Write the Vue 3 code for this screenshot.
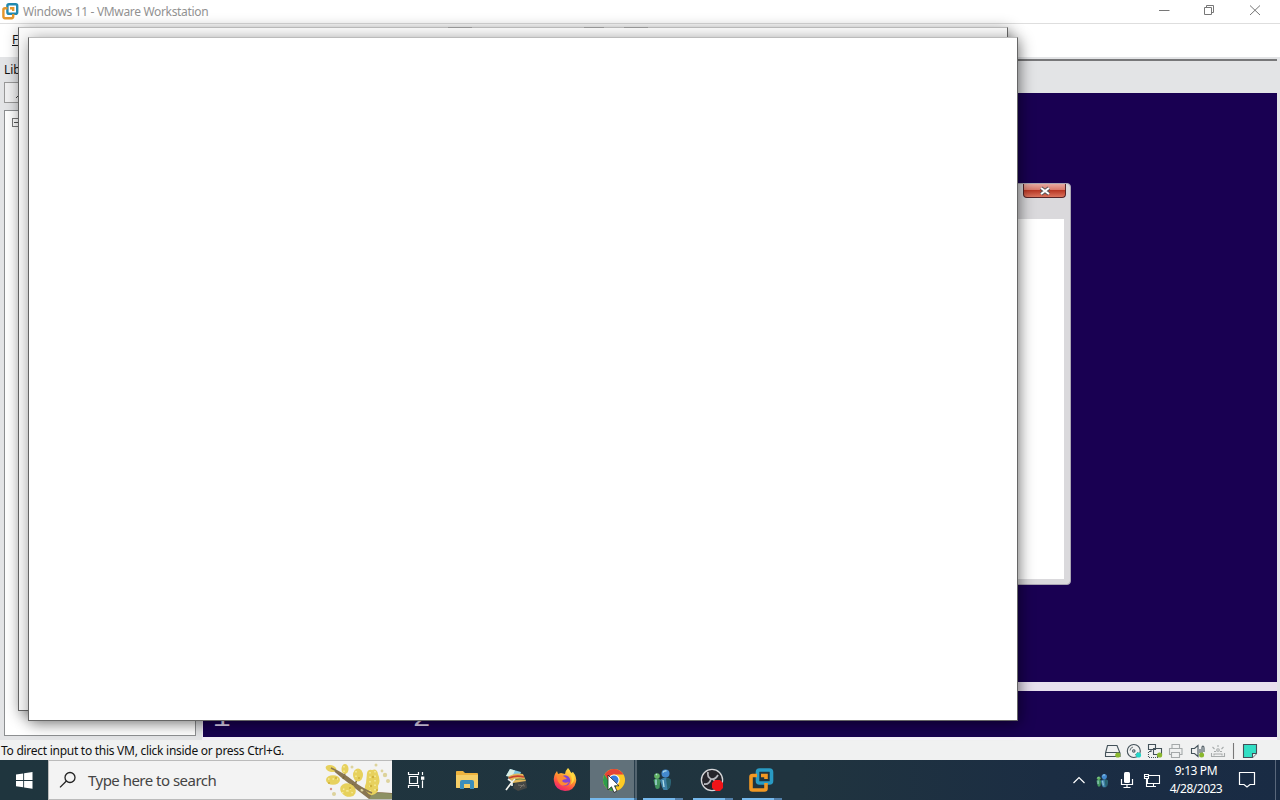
<script setup>
import { ref } from "vue";

const time = ref('9:13 PM')
const date = ref('4/28/2023')
const status = ref('To direct input to this VM, click inside or press Ctrl+G.')
</script>

<template>
    <div class="desktop">
        <div class="vmware">
            <header class="title_bar">
                <svg class="logo" width="18" height="18" viewBox="0 0 18 18" fill="none" stroke-width="2.4">
                    <rect x="6.4" y="2.2" width="9.8" height="9.6" rx="1.6" stroke="#2389ae" />
                    <path d="M6.5 6.2H4Q2.4 6.2 2.4 7.8V14.6Q2.4 16.2 4 16.2H10.6Q12.2 16.2 12.2 14.6V12M9 6.2H12.2V9" stroke="#e5962b" />
                </svg>
                <span class="title">Windows 11 - VMware Workstation</span>
                <svg class="controls" width="112" height="23" viewBox="0 0 112 23" fill="none" stroke="#777">
                    <path d="M7 10.5H17.5M52.5 7.5H59.5V14.5H52.5ZM54.5 7V5.5H61.5V12.5H60M98 5.5L108 15M108 5.5L98 15" />
                </svg>
            </header>
            <nav class="menu"><u>F</u>ile</nav>
            <main class="body">
                <aside class="library">
                    <span class="lib_title">Library</span>
                    <div class="lib_search">
                        <svg width="12" height="12" viewBox="0 0 12 12" fill="none" stroke="#444"><path d="M1 10L5 6" /><circle cx="7.5" cy="4" r="3" /></svg>
                    </div>
                    <div class="tree"><i class="expand"></i></div>
                </aside>
                <section class="guest">
                    <div class="tabs"></div>
                    <div class="screen"></div>
                    <div class="divider"></div>
                    <div class="console"><span class="one">1</span><span class="two">2</span></div>
                </section>
            </main>
            <footer class="status">
                <span class="status_text">{{ status }}</span>
                <svg class="devices" width="160" height="18" viewBox="0 0 160 18" fill="none" stroke="#435159" stroke-width="1.1">
                    <path d="M7.5 3.5H17L20 11V14.5H5.5V11ZM5.5 10.5H20" />
                    <circle cx="33.8" cy="9" r="6.5" /><circle cx="33.8" cy="9" r="1.2" />
                    <path d="M30 8.5A4 4 0 0 1 33 5M35 13A4 4 0 0 0 38 10" stroke-width=".8" />
                    <path d="M48.5 2.5H55.5V7.5H48.5ZM53.5 6.5H61.5V12.5H53.5ZM51 7.5V9.5H49M57.5 12.5V15" />
                    <path d="M48.5 10V15.5H58" stroke-dasharray="1 1" />
                    <g stroke="#a5a9aa"><path d="M72 6.5V2.5H79.5V6.5M71.5 12.5H69.5V6.5H82V12.5H80M71.5 10.5H79.5V15.5H71.5Z" /></g>
                    <path d="M91.5 6.5H94.5L98 3.5V14.5L94.5 11.5H91.5ZM100 7V11M102 13V5.5Q102 4 103 4T104 6V10" />
                    <g stroke="#a7abab"><path d="M111.5 11V14.5H124.5V11M114 13.5V12H122V13.5M118 3V5M112.5 5L114.5 7M123.5 5L121.5 7M114 9.5H116M120 9.5H122" /><circle cx="118" cy="8" r="1.3" /></g>
                    <g stroke="none"><circle cx="17.8" cy="13" r="2.6" fill="#8ab82e" /><circle cx="38.5" cy="13" r="2.6" fill="#25d5c6" /><circle cx="59.6" cy="13" r="2.6" fill="#8ab82e" /><circle cx="101.6" cy="13" r="2.5" fill="#8ab82e" /></g>
                    <path d="M133.5 1V17" stroke="#777" />
                    <path d="M143.5 2.5H156.5V11.5L152.5 15.5H143.5Z" fill="#32dfc4" /><path d="M156.5 11.5H152.5V15.5" fill="#edf7f6" />
                </svg>
            </footer>
        </div>

        <div class="dialog">
            <div class="dialog_close">
                <svg width="14" height="10" viewBox="0 0 14 10"><path d="M3 2L11 8M11 2L3 8" stroke="#555" stroke-width="4" /><path d="M3 2L11 8M11 2L3 8" stroke="#fff" stroke-width="2.1" /></svg>
            </div>
            <div class="dialog_body"></div>
        </div>
        <div class="window back"><i class="mark m1"></i><i class="mark m2"></i><i class="mark m3"></i></div>
        <div class="window front"></div>

        <div class="taskbar">
            <div class="start">
                <svg width="17" height="17" viewBox="0 0 17 17" fill="#fff"><path d="M0 2.5L7.2 1.5V8H0ZM8.1 1.3L16.5 0V8H8.1ZM0 8.9H7.2V15.3L0 14.3ZM8.1 8.9H16.5V16.8L8.1 15.5Z" /></svg>
            </div>
            <div class="search">
                <svg class="glass" width="18" height="18" viewBox="0 0 18 18" fill="none" stroke="#222" stroke-width="1.3"><circle cx="11" cy="6.5" r="5" /><path d="M7.4 10L1 16.4" /></svg>
                <span>Type here to search</span>
                <svg class="branch" width="68" height="38" viewBox="0 0 68 38">
                    <path d="M7 7Q20 13 28 20T48 31Q58 31 68 32V38H45Q28 25 18 17T7 7Z" fill="#897653" />
                    <path d="M48 33Q58 31 68 33V38H45Z" fill="#8c9164" />
                    <path d="M19 18Q22 12 21 8M31 24Q33 19 34 14M29 23L24 29" stroke="#79683f" fill="none" stroke-width="1.4" />
                    <g fill="#e7d15d">
                        <ellipse cx="7" cy="7.5" rx="5.5" ry="3.3" transform="rotate(15 7 7.5)" />
                        <ellipse cx="9" cy="19" rx="7" ry="4.8" /><ellipse cx="21" cy="8" rx="3.5" ry="5" />
                        <ellipse cx="34" cy="14" rx="5" ry="6.5" /><ellipse cx="24" cy="29" rx="8" ry="6.5" transform="rotate(25 24 29)" />
                        <path d="M43 12Q44 8 48 9Q53 7 54 13Q57 20 54 25Q55 31 51 33Q46 36 43 31Q39 29 42 22Z" />
                    </g>
                    <g fill="none" stroke="#f6eb9c" stroke-width="1.5" stroke-dasharray="1.5 3"><path d="M4 18H14M19 28L29 32M46 11V31M51 10V32M32 10V18M20 5V11M18 32L27 28" /></g>
                    <g fill="#cfb13b"><circle cx="5" cy="22" r="1" /><circle cx="12" cy="17" r="1" /><circle cx="26" cy="27" r="1" /><circle cx="49" cy="16" r="1.2" /><circle cx="47" cy="25" r="1.2" /><circle cx="53" cy="29" r="1" /><circle cx="35" cy="17" r="1" /></g>
                    <g fill="#ddd39c"><circle cx="28" cy="6" r="1.5" /><circle cx="52" cy="4" r="1.5" /><circle cx="61" cy="14" r="2.2" /><circle cx="64" cy="20" r="2" /><circle cx="58" cy="10" r="1.4" /><circle cx="10" cy="33" r="2" /><circle cx="38" cy="29" r="1.5" /></g>
                    <path d="M7 7Q20 13 28 20T48 32" stroke="#897653" stroke-width="1.8" fill="none" />
                    <circle cx="7" cy="28" r="1.2" fill="#d89482" />
                </svg>
            </div>
            <div class="app first">
                <svg width="24" height="24" viewBox="0 0 24 24" fill="none" stroke="#fff" stroke-width="1.2"><path d="M3.5 4V6.5H13.5V4M4.5 8.5H12.5V15.5H4.5ZM3.5 20V17.5H13.5V20M17.5 4V7M17.5 12.5V20" /><rect x="16" y="8.5" width="3.3" height="3.3" fill="#fff" stroke="none" /></svg>
            </div>
            <div class="app">
                <svg width="24" height="24" viewBox="0 0 24 24"><path d="M1 3.5Q1 3 2 3H8L10 5H22Q23 5 23 6V19Q23 20 22 20H2Q1 20 1 19Z" fill="#eeb33e" /><path d="M1 7H23V19Q23 20 22 20H2Q1 20 1 19Z" fill="#f5ce67" /><path d="M5 21V14Q5 12 7 12H17Q19 12 19 14V21H15V16H9V21Z" fill="#3b8ebb" /></svg>
            </div>
            <div class="app">
                <svg width="24" height="24" viewBox="0 0 24 24">
                    <path d="M12 12L22 13L23 20L14 23L9 20Z" fill="#454745" /><path d="M6 1L17 4L15 10L2 8Z" fill="#7dc6e3" /><path d="M6 1L11 2.5L8 9L2 8Z" fill="#d9eee5" />
                    <path d="M4 9Q10 4 19 6L22 13L9 15Z" fill="#e3b85b" /><path d="M5 10Q12 7 20 9" stroke="#c5432f" stroke-width="1.8" fill="none" /><path d="M8 13Q13 10 21 11.5" stroke="#6a8748" stroke-width="1.2" fill="none" />
                    <path d="M4 11L8 14L11 11M8 14L2 22M8 14L8 18" stroke="#f3f3ed" stroke-width="1.7" fill="none" /><path d="M14 17L21 18M16 20L20 16" stroke="#77726a" />
                </svg>
            </div>
            <div class="app">
                <svg width="24" height="24" viewBox="0 0 24 24">
                    <defs>
                        <linearGradient id="fox" x1=".8" y1="0" x2=".3" y2="1"><stop stop-color="#fff052" /><stop offset=".45" stop-color="#ff9a2d" /><stop offset=".75" stop-color="#ff4b48" /><stop offset="1" stop-color="#e72178" /></linearGradient>
                    </defs>
                    <path d="M15 0Q17 2 18 5L20 4Q24 9 23 14Q21 23 12 23Q2 22 1 13Q0 8 4 3L5 6L8 5L12 6Q12 3 15 0Z" fill="url(#fox)" />
                    <circle cx="12" cy="12.5" r="5.2" fill="#8344d5" /><path d="M4 8Q8 6 12 9L14 11Q10 11 9 13Q11 16 16 14Q13 19 8 17Q4 14 4 8Z" fill="#ff8a34" /><path d="M15 0Q17 5 18 8Q20 13 17 17Q23 13 21 7L18 5Z" fill="#ffd73d" />
                </svg>
            </div>
            <div class="app active">
                <svg width="24" height="24" viewBox="0 0 24 24">
                    <circle cx="12" cy="12" r="11" fill="#fdca24" /><path d="M2.5 6.5A11 11 0 0 1 21.5 6.5H12A5.5 5.5 0 0 0 7 14.5Z" fill="#e54335" /><path d="M2.5 6.5A11 11 0 0 0 11 23L16 16Q10 19 7 14Z" fill="#2d9d4d" />
                    <circle cx="12" cy="12" r="5.6" fill="#fff" /><circle cx="12" cy="12" r="4.5" fill="#3579dc" />
                </svg>
            </div>
            <div class="app running wide">
                <svg width="24" height="24" viewBox="0 0 24 24">
                    <g id="pawns">
                        <path d="M3.5 12Q7 8.500 10.500 12L9.500 20Q7 22 5.500 20Z" fill="#43955f" /><circle cx="7" cy="8" r="2.8" fill="#65b565" />
                        <path d="M10 12Q15.500 7 21 12L20 19L17.500 22H13.500L12 19Z" fill="#3f82a8" /><path d="M16 10.500Q19 9 21 12L20 19L17.500 22Z" fill="#28636f" /><circle cx="15.500" cy="5.500" r="4" fill="#4389cf" />
                        <path d="M13 4.500Q14 2.500 16.500 3M13 12L14 19M6 11.500V17M6 7L7 6" stroke="#b5e1ed" stroke-width="1.300" fill="none" />
                    </g>
                </svg>
            </div>
            <div class="app running">
                <svg width="24" height="24" viewBox="0 0 24 24">
                    <circle cx="12" cy="12" r="10.6" fill="#25242a" stroke="#d5d6d9" stroke-width="1.3" />
                    <g fill="none" stroke="#b7b8be" stroke-width="1.8"><path d="M8 4Q7 9 11 11Q15 12 18 7M4 16Q9 17 11 11M12 11Q16 12 16 19" /></g>
                    <path d="M15 12H20L23 15V20L20 23H16L12 20V15Z" fill="#f01418" />
                </svg>
            </div>
            <div class="app running">
                <svg width="26" height="26" viewBox="0 0 26 26" fill="none" stroke-width="3.6">
                    <rect x="9.500" y="3" width="14" height="13" rx="2" stroke="#299bc4" /><path d="M9 8.500H4.500Q3 8.500 3 10V21.500Q3 23 4.500 23H16.500Q18 23 18 21.500V16M13 8.500H18V12" stroke="#f29823" />
                </svg>
            </div>
            <div class="tray">
                <svg width="14" height="10" viewBox="0 0 14 10" fill="none" stroke="#fff" stroke-width="1.2"><path d="M1.5 8L7 2.5L12.5 8" /></svg>
                <svg class="tray_pawns" width="14" height="15" viewBox="2 0 20 23"><use href="#pawns" /></svg>
                <svg class="mic" width="14" height="18" viewBox="0 0 14 18"><rect x="4" y="1" width="6" height="11" rx="1.5" fill="#fff" /><path d="M1.5 8V13.5H12.5V8M7 13.5V16.5M3.5 16.5H10.5" fill="none" stroke="#fff" stroke-width="1.2" /></svg>
                <svg class="net" width="18" height="16" viewBox="0 0 18 16" fill="none" stroke="#fff" stroke-width="1.1"><path d="M6 3.5H16.5V11.5H4.5V7M1.5 2.5H5.5V6.5H1.5ZM3.5 6.5V14.5H13M10.5 11.5V14.5M2 4.5H5" /></svg>
                <div class="clock"><span>{{ time }}</span><span class="date">{{ date }}</span></div>
                <svg class="note" width="18" height="18" viewBox="0 0 18 18" fill="none" stroke="#fff" stroke-width="1.2"><path d="M1.5 1.5H16.5V13.5H12L9 16L6 13.5H1.5Z" /></svg>
            </div>
        </div>
        <svg class="cursor" width="13" height="20" viewBox="0 0 13 20"><path d="M1 1V16L4.5 12.8L7 18.5L10 17L7.5 11.8H12Z" fill="#fff" stroke="#222" stroke-width=".8" /></svg>
    </div>
</template>

<style>
body {
    margin: 0;
    overflow: hidden;
}
</style>

<style scoped>
.desktop {
    position: relative;
    width: 1280px;
    height: 800px;
    overflow: hidden;
    display: flex;
    flex-direction: column;
    font-family: "Noto Sans", "Open Sans", sans-serif;
    font-size: 11px;
    color: #111;
}

svg {
    display: block;
    flex-shrink: 0;
}

.vmware {
    height: 760px;
    display: flex;
    flex-direction: column;
    background: #fff;
}

.title_bar {
    height: 23px;
    display: flex;
    align-items: center;
    border-bottom: 1px solid #dedede;
}

.logo {
    margin-left: 1px;
    margin-top: -2px;
}

.title {
    margin-left: 4px;
    color: #929292;
    font-size: 12px;
    letter-spacing: -0.33px;
    white-space: nowrap;
}

.controls {
    margin-left: auto;
    margin-right: 16px;
}

.menu {
    height: 33px;
    padding-left: 12px;
    box-sizing: border-box;
    line-height: 32px;
    font-size: 12px;
}

.body {
    height: 683px;
    display: flex;
    background: #e3e4e6;
}

.library {
    width: 202px;
    box-sizing: border-box;
    padding: 4px 6px 4px 4px;
    display: flex;
    flex-direction: column;
}

.lib_title {
    height: 21px;
    line-height: 18px;
    font-size: 12px;
    letter-spacing: -0.1px;
}

.lib_search {
    width: 190px;
    height: 21px;
    margin-bottom: 7px;
    border: 1px solid #999;
    padding: 5px 0 0 10px;
    box-sizing: border-box;
    background: #f0f0f1;
}

.tree {
    width: 192px;
    height: 626px;
    flex-shrink: 0;
    box-sizing: border-box;
    border: 1px solid #8d8f91;
    background: #fff;
    padding: 7px;
}

.expand {
    display: block;
    width: 7px;
    height: 7px;
    border: 1px solid #777;
    background: linear-gradient(#555, #555) center / 5px 1px no-repeat;
}

.guest {
    width: 1075px;
    padding-top: 2px;
}

.tabs {
    height: 33px;
    border-top: 2px solid #777779;
    margin-bottom: -1px;
    background: #e3e4e6;
}

.screen {
    height: 589px;
    background: #190052;
}

.divider {
    height: 9px;
    background: #e8e0ee;
}

.console {
    position: relative;
    height: 46px;
    border-bottom: 3px solid #f6effa;
    border-left: 1px solid #f1e8f6;
    background: #190052;
    color: #e7daf5;
    font: 26px/26px "Liberation Mono", monospace;
    overflow: hidden;
}

.one,
.two {
    position: absolute;
    top: 15px;
    left: 11px;
    transform: scaleX(1.15);
}

.two {
    left: 211px;
}

.status {
    height: 20px;
    display: flex;
    align-items: center;
    background: #f0f1f1;
}

.status_text {
    padding-left: 1px;
    font-size: 12px;
    letter-spacing: -0.27px;
    white-space: nowrap;
}

.devices {
    margin-left: auto;
    margin-right: 20px;
    margin-top: 2px;
}

.dialog {
    position: absolute;
    top: 183px;
    left: 980px;
    width: 91px;
    height: 402px;
    border: 1px solid #aaa5b3;
    border-radius: 4px;
    box-sizing: border-box;
    background: #dad9dc;
    display: flex;
    flex-direction: column;
}

.dialog_close {
    width: 43px;
    height: 14px;
    box-sizing: border-box;
    align-self: flex-end;
    margin-right: 4px;
    display: flex;
    justify-content: center;
    align-items: center;
    border: 1px solid #572528;
    border-top: 0;
    border-radius: 0 0 4px 4px;
    background: linear-gradient(#e6aaa0, #d8796b 45%, #b93825 50%, #db735d);
}

.dialog_body {
    height: 360px;
    margin: 21px 6px 0 0;
    background: #fff;
}

.window {
    position: absolute;
    width: 990px;
    height: 684px;
    box-sizing: border-box;
    border: 1px solid #666;
    border-top-color: #bbb;
    box-shadow: 2px 3px 14px rgba(0, 0, 0, 0.45);
}

.back {
    top: 27px;
    left: 18px;
    background: #fafafa;
}

.front {
    top: 37px;
    left: 28px;
    background: #fff;
}

.mark {
    position: absolute;
    top: -1px;
    height: 1px;
    width: 24px;
    left: 429px;
    background: #999;
}

.m2 {
    left: 565px;
    width: 20px;
}

.m3 {
    left: 605px;
}

.taskbar {
    position: relative;
    height: 40px;
    display: flex;
    background: linear-gradient(90deg, #1f353e 0, #20343f 800px, #1b2d43 1050px, #192b44 1280px);
}

.start {
    width: 48px;
    display: flex;
    align-items: center;
    justify-content: center;
}

.search {
    width: 344px;
    height: 40px;
    box-sizing: border-box;
    border: 1px solid #bbb;
    border-right: 0;
    background: #f3f3f3;
    display: flex;
    align-items: center;
    font-size: 15px;
    letter-spacing: -0.52px;
    color: #444;
}

.glass {
    margin: 0 11px 0 10px;
}

.branch {
    margin-left: auto;
}

.app {
    width: 49px;
    box-sizing: border-box;
    display: flex;
    align-items: center;
    justify-content: center;
}

.first {
    width: 50px;
}

.active {
    width: 47px;
    margin-left: 1px;
    background: linear-gradient(90deg, #76b9ed 44px, #45759d 44px) bottom / 100% 2px no-repeat,
        linear-gradient(90deg, #61717a 44px, #293e4c 44px, #293e4c 45px, #53646f 45px);
}

.running {
    background: linear-gradient(90deg, #76b9ed 32px, #517fa9 32px) 6px 100% / 40px 2px no-repeat;
}

.wide {
    width: 50px;
}

.tray {
    margin-left: auto;
    width: 204px;
    height: 40px;
    box-sizing: border-box;
    border-right: 1px solid #59677b;
    margin-right: 4px;
    display: flex;
    align-items: center;
    color: #fff;
}

.tray_pawns {
    margin-left: 9px;
}

.mic {
    margin-left: 11px;
}

.net {
    margin-left: 9px;
}

.clock {
    width: 64px;
    margin-left: 3px;
    display: flex;
    flex-direction: column;
    align-items: center;
    font-size: 12px;
    line-height: 18px;
    letter-spacing: -0.4px;
    white-space: nowrap;
    margin-top: -1px;
}

.date {
    letter-spacing: -0.5px;
}

.note {
    margin-left: 10px;
}

.cursor {
    position: absolute;
    left: 607px;
    top: 774px;
}
</style>
